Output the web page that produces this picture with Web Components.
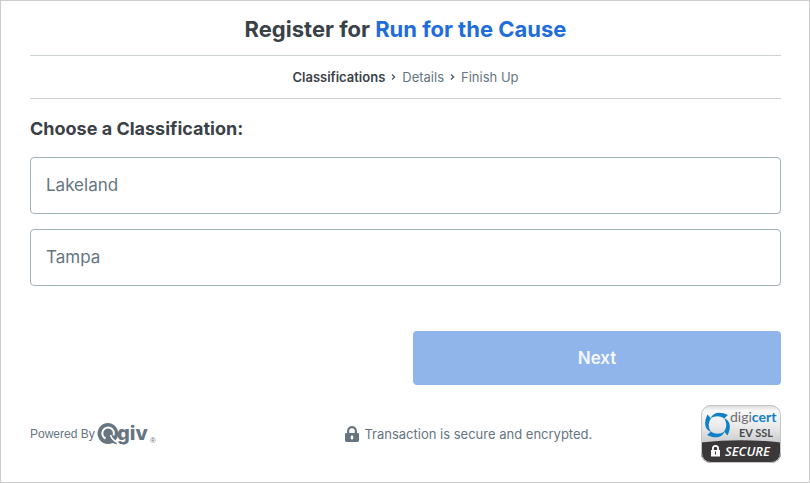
<!DOCTYPE html>
<html lang="en">
<head>
<meta charset="utf-8">
<title>Register for Run for the Cause</title>
<style>
    * { box-sizing: border-box; }
    body {
        margin: 0;
        font-family: Inter, "Open Sans", sans-serif;
        color: #3a4147;
        background: #fff;
    }
</style>
</head>
<body>
<registration-page>
    <page-title slot="header" event="Run for the Cause">Register for</page-title>
    <step-trail slot="header" steps="Classifications,Details,Finish Up" current="0"></step-trail>
    <classification-picker options="Lakeland,Tampa">Choose a Classification:</classification-picker>
    <next-button>Next</next-button>
    <page-footer slot="footer">
        <qgiv-logo slot="start">Powered By</qgiv-logo>
        <secure-note>Transaction is secure and encrypted.</secure-note>
        <digicert-badge slot="end"></digicert-badge>
    </page-footer>
</registration-page>

<script>
class RegistrationPage extends HTMLElement {
    constructor() {
        super();
        this.attachShadow({ mode: 'open' });

        this.shadowRoot.innerHTML = `
            <style>
                :host {
                    display: flex;
                    flex-direction: column;
                    box-sizing: border-box;
                    min-height: 100vh;
                    padding: 0 28px 0 29px;
                    border: 1px solid #ccc;
                }
                main {
                    display: flex;
                    flex-direction: column;
                }
            </style>
            <header><slot name="header"></slot></header>
            <main><slot></slot></main>
            <slot name="footer"></slot>
        `;
    }
}

class PageTitle extends HTMLElement {
    constructor() {
        super();
        this.attachShadow({ mode: 'open' });

        this.shadowRoot.innerHTML = `
            <style>
                :host {
                    display: block;
                    padding: 12px 0 10px;
                    border-bottom: 1px solid #cdd2d5;
                }
                h1 {
                    margin: 0;
                    font-size: 22px;
                    font-weight: 700;
                    line-height: 32px;
                    text-align: center;
                }
                span { color: #1f6cdb; }
            </style>
            <h1><slot></slot> <span></span></h1>
        `;
    }

    connectedCallback() {
        this.shadowRoot.querySelector('span').textContent = this.getAttribute('event');
    }
}

class StepTrail extends HTMLElement {
    constructor() {
        super();
        this.attachShadow({ mode: 'open' });

        this.shadowRoot.innerHTML = `
            <style>
                :host {
                    display: block;
                    padding: 11px 0;
                    border-bottom: 1px solid #cdd2d5;
                }
                ol {
                    display: flex;
                    justify-content: center;
                    gap: 6px;
                    margin: 0;
                    padding: 0;
                    list-style: none;
                    font-size: 13px;
                    line-height: 20px;
                    color: #66757f;
                }
                li {
                    display: flex;
                    align-items: center;
                    gap: 6px;
                }
                li[aria-current] {
                    font-weight: 600;
                    color: #3a4147;
                }
                svg {
                    width: 5px;
                    height: 6px;
                    fill: none;
                    stroke: #4d5a63;
                    stroke-width: 1.3;
                }
            </style>
            <nav aria-label="Steps"><ol></ol></nav>
        `;
    }

    connectedCallback() {
        const steps = this.getAttribute('steps').split(',');
        const current = Number(this.getAttribute('current'));
        const arrow = '<svg viewBox="0 0 5 6" aria-hidden="true"><path d="M1 .5 3.6 3 1 5.5"/></svg>';

        this.shadowRoot.querySelector('ol').innerHTML = steps.map((step, i) => `
            <li ${i === current ? 'aria-current="step"' : ''}>${i > 0 ? arrow : ''}<span>${step}</span></li>
        `).join('');
    }
}

class ClassificationPicker extends HTMLElement {
    constructor() {
        super();
        this.attachShadow({ mode: 'open' });

        this.shadowRoot.innerHTML = `
            <style>
                :host { display: block; }
                fieldset {
                    display: grid;
                    gap: 15px;
                    margin: 0;
                    padding: 0;
                    border: 0;
                }
                legend {
                    padding: 16px 0 14px;
                    font-size: 18px;
                    font-weight: 700;
                    line-height: 28px;
                }
                label {
                    display: block;
                    padding: 15px;
                    border: 1px solid #a3b1b8;
                    border-radius: 4px;
                    font-size: 17px;
                    line-height: 25px;
                    color: #66757f;
                    cursor: pointer;
                }
                input {
                    appearance: none;
                    position: absolute;
                    margin: 0;
                }
                label:has(input:focus-visible),
                label:has(input:checked) {
                    border-color: #1f6cdb;
                    color: #1f6cdb;
                }
            </style>
            <fieldset>
                <legend><slot></slot></legend>
            </fieldset>
        `;
    }

    connectedCallback() {
        const fieldset = this.shadowRoot.querySelector('fieldset');

        this.getAttribute('options').split(',').forEach(option => {
            const id = option.toLowerCase();
            fieldset.insertAdjacentHTML('beforeend', `
                <label for="${id}"><input type="radio" name="classification" id="${id}" value="${id}">${option}</label>
            `);
        });

        fieldset.addEventListener('change', () => {
            document.querySelector('next-button').enable();
        });
    }
}

class NextButton extends HTMLElement {
    constructor() {
        super();
        this.attachShadow({ mode: 'open' });

        this.shadowRoot.innerHTML = `
            <style>
                :host {
                    display: grid;
                    grid-template-columns: 1fr 1fr;
                    gap: 15px;
                    padding: 45px 0 20px;
                }
                button {
                    grid-column: 2;
                    padding: 15px;
                    border: none;
                    border-radius: 4px;
                    background-color: #1f6cdb;
                    font-family: inherit;
                    font-size: 17px;
                    font-weight: 600;
                    line-height: 24px;
                    color: #fff;
                    cursor: pointer;
                }
                button:disabled {
                    background-color: #8fb5eb;
                    color: #f4f8fd;
                    cursor: default;
                }
            </style>
            <button type="button" disabled><slot></slot></button>
        `;
    }

    enable() {
        this.shadowRoot.querySelector('button').disabled = false;
    }
}

class PageFooter extends HTMLElement {
    constructor() {
        super();
        this.attachShadow({ mode: 'open' });

        this.shadowRoot.innerHTML = `
            <style>
                :host {
                    display: grid;
                    grid-template-columns: auto 1fr auto;
                    align-items: center;
                    padding-bottom: 18px;
                }
                ::slotted(*) { grid-row: 1; }
                /* the note is centred in all the room right of the logo */
                slot:not([name])::slotted(*) {
                    grid-column: 2 / 4;
                    justify-self: center;
                }
                slot[name="end"]::slotted(*) { grid-column: 3; }
            </style>
            <slot name="start"></slot>
            <slot></slot>
            <slot name="end"></slot>
        `;
    }
}

class QgivLogo extends HTMLElement {
    constructor() {
        super();
        this.attachShadow({ mode: 'open' });

        this.shadowRoot.innerHTML = `
            <style>
                :host {
                    display: flex;
                    align-items: center;
                    gap: 2px;
                    font: 12px/16px "Liberation Sans", sans-serif;
                    color: #66757f;
                }
                svg {
                    width: 60px;
                    height: 30px;
                    fill: currentColor;
                }
                .name { font: 800 20px Inter, sans-serif; }
                .mark { font: 8px "Liberation Sans", sans-serif; }
            </style>
            <slot></slot>
            <svg viewBox="0 0 60 30" role="img" aria-label="Qgiv">
                <path d="M11 4a10.500 10.500 0 1 0 4.500 20l4.500 1.500-1.500-4A10.500 10.500 0 0 0 11 4Z"/>
                <path d="M8.500 19.500A5.800 5.800 0 1 1 16.500 16.500" fill="none" stroke="#fff" stroke-width="2"/>
                <path d="M13.500 16Q15 20.500 19.500 23" fill="none" stroke="#fff" stroke-width="1.500"/>
                <text class="name" x="20" y="21">giv</text>
                <text class="mark" x="53" y="24">®</text>
            </svg>
        `;
    }
}

class SecureNote extends HTMLElement {
    constructor() {
        super();
        this.attachShadow({ mode: 'open' });

        this.shadowRoot.innerHTML = `
            <style>
                :host {
                    display: flex;
                    align-items: center;
                    gap: 5px;
                    font-size: 13px;
                    line-height: 20px;
                    color: #66757f;
                }
                svg {
                    width: 14px;
                    height: 16px;
                    fill: currentColor;
                }
            </style>
            <svg viewBox="0 0 14 16" aria-hidden="true">
                <path fill-rule="evenodd" d="M2 7V5a5 5 0 0 1 10 0v2h.6A1.4 1.4 0 0 1 14 8.400V14.600A1.4 1.4 0 0 1 12.600 16H1.400A1.4 1.4 0 0 1 0 14.600V8.400A1.4 1.4 0 0 1 1.400 7ZM4.200 7H9.800V5a2.800 2.800 0 0 0-5.600 0ZM7 9.500a1.300 1.300 0 0 0-1.300 1.300v1.400a1.300 1.300 0 0 0 2.600 0v-1.400A1.300 1.300 0 0 0 7 9.500Z"/>
            </svg>
            <span><slot></slot></span>
        `;
    }
}

class DigicertBadge extends HTMLElement {
    constructor() {
        super();
        this.attachShadow({ mode: 'open' });

        this.shadowRoot.innerHTML = `
            <style>
                :host { display: block; }
                svg {
                    display: block;
                    width: 80px;
                    height: 58px;
                    font-family: Lato, sans-serif;
                }
                .brand { font-size: 14px; fill: #6d6e71; }
                .brand tspan { font-weight: bold; fill: #0f80c8; }
                .kind { font-size: 11px; font-weight: bold; fill: #4a4a4c; }
                .secure { font: italic 600 13px "Open Sans", sans-serif; fill: #fff; }
            </style>
            <svg viewBox="0 0 80 58" role="img" aria-label="DigiCert EV SSL secure">
                <defs>
                    <linearGradient id="shine" x2="0" y2="1">
                        <stop offset="0" stop-color="#d8d9da"/>
                        <stop offset=".1" stop-color="#f8f8f8"/>
                        <stop offset=".35" stop-color="#ececed"/>
                        <stop offset=".65" stop-color="#cbccce"/>
                    </linearGradient>
                    <clipPath id="shape"><rect width="80" height="58" rx="10"/></clipPath>
                </defs>
                <g clip-path="url(#shape)">
                    <rect width="80" height="58" fill="url(#shine)"/>
                    <path d="M0 37.500Q40 33 80 37.500V58H0Z" fill="#3a3839"/>
                </g>
                <rect x=".5" y=".5" width="79" height="57" rx="9.500" fill="none" stroke="#c4c5c7"/>
                <g fill="#0f80c8">
                    <path id="blade" d="M9.500 13.500C12 7 19 6 27 10L23 13.500C19 10.500 14 10.500 9.500 13.500Z"/>
                    <use href="#blade" transform="rotate(90 16.500 20)"/>
                    <use href="#blade" transform="rotate(180 16.500 20)"/>
                    <use href="#blade" transform="rotate(270 16.500 20)"/>
                </g>
                <text class="brand" x="29" y="17">digi<tspan>cert</tspan></text>
                <text class="kind" x="38" y="32">EV SSL</text>
                <path fill="#fff" fill-rule="evenodd" d="M11 45V43.500a3.500 3.500 0 0 1 7 0V45h1v6.500H10V45ZM12.800 45h3.400v-1.500a1.700 1.700 0 0 0-3.400 0ZM14 46.500v3h1v-3Z"/>
                <text class="secure" x="24" y="51">SECURE</text>
            </svg>
        `;
    }
}

customElements.define('registration-page', RegistrationPage);
customElements.define('page-title', PageTitle);
customElements.define('step-trail', StepTrail);
customElements.define('classification-picker', ClassificationPicker);
customElements.define('next-button', NextButton);
customElements.define('page-footer', PageFooter);
customElements.define('qgiv-logo', QgivLogo);
customElements.define('secure-note', SecureNote);
customElements.define('digicert-badge', DigicertBadge);
</script>
</body>
</html>
